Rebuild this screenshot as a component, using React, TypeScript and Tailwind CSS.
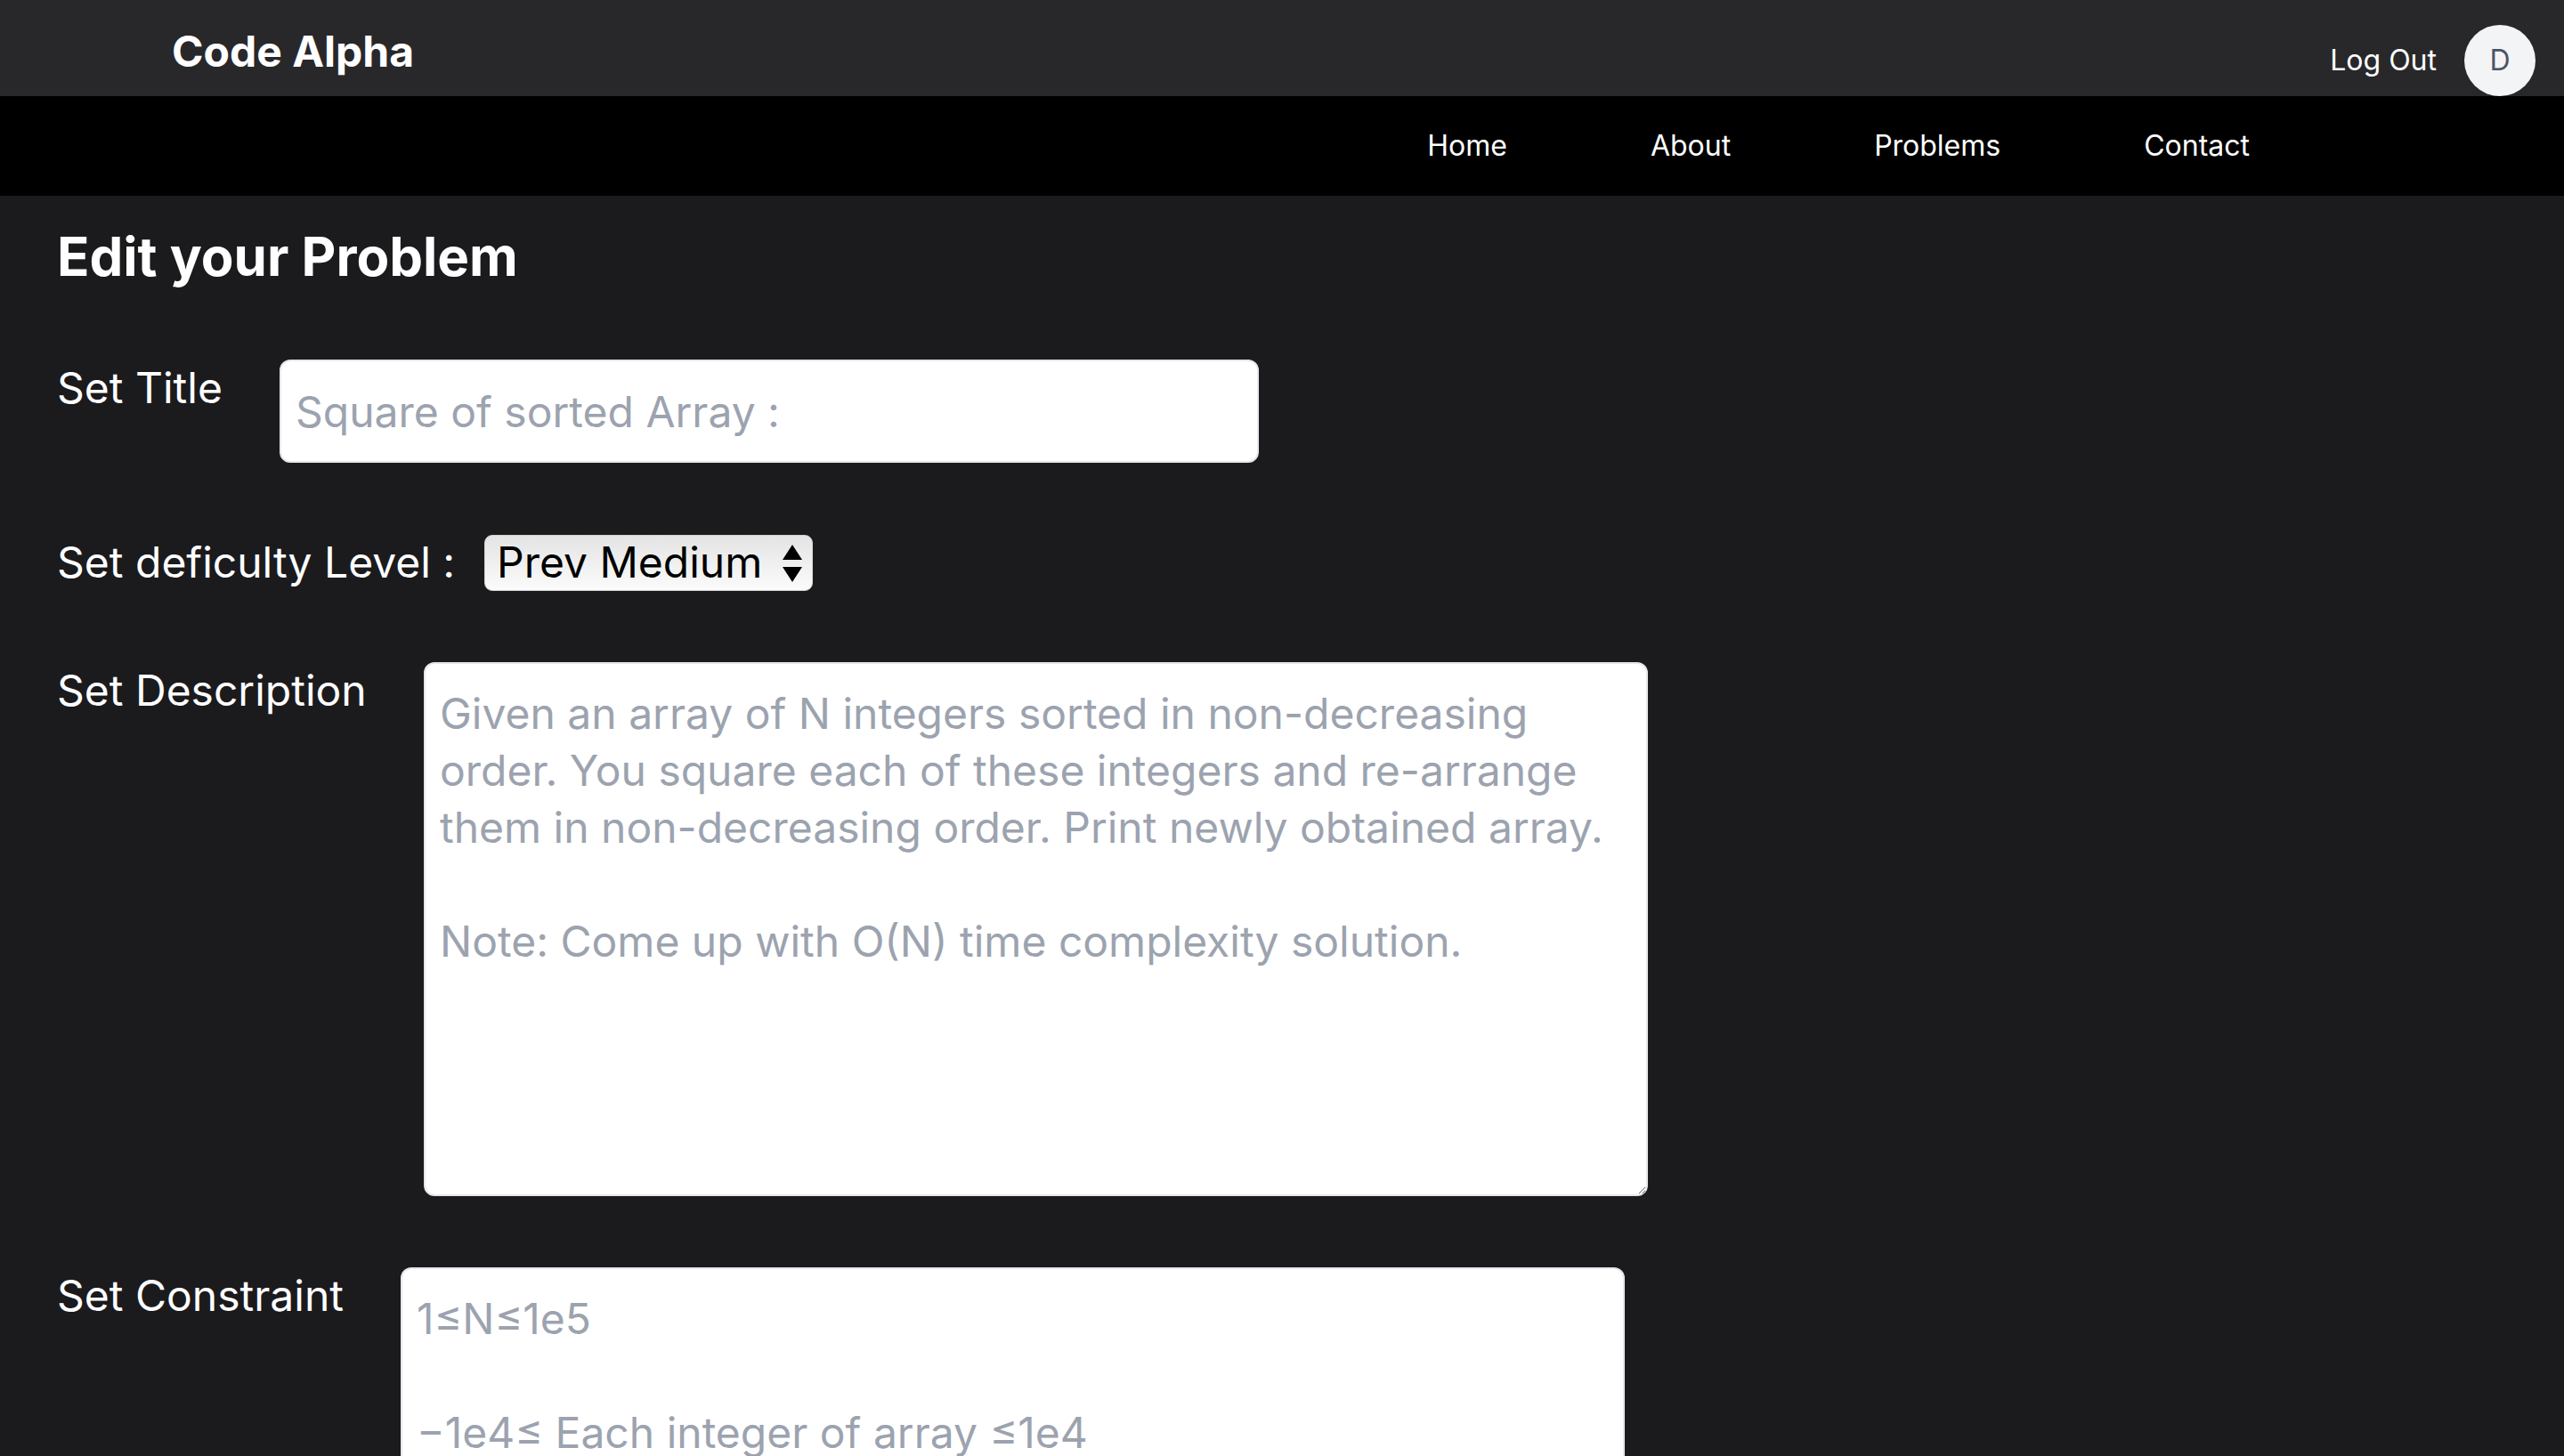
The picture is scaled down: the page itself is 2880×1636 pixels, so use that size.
import React from "react";

export default function App() {
  const font = { fontFamily: "Inter, 'Noto Sans', sans-serif" };
  return (
    <div className="min-h-screen bg-[#1b1b1e] text-white" style={font}>
      {/* Top bar */}
      <header className="flex h-[108px] items-start justify-between bg-[#28282b]">
        <div className="pl-[193px] pt-[26px] text-[48px] font-bold leading-[64px]">Code Alpha</div>
        <div className="flex items-center gap-[31px] pr-[32px] pt-[28px]">
          <button className="text-[32px] leading-[48px] text-white">Log Out</button>
          <div className="flex h-[80px] w-[80px] items-center justify-center rounded-full bg-[#f3f4f6] text-[32px] text-[#4b5563]">
            D
          </div>
        </div>
      </header>

      {/* Nav */}
      <nav className="flex h-[112px] items-center justify-end gap-[161px] bg-black pr-[353px] text-[32px] leading-[48px]">
        <a>Home</a>
        <a>About</a>
        <a>Problems</a>
        <a>Contact</a>
      </nav>

      {/* Main */}
      <main className="flex flex-col gap-[80px] px-[64px] pt-[32px] pb-[80px]">
        <h1 className="text-[60px] font-bold leading-[72px]">Edit your Problem</h1>

        <div className="flex items-start">
          <label className="w-[250px] shrink-0 text-[48px] leading-[64px]">Set Title</label>
          <input
            className="h-[116px] w-[1100px] rounded-[12px] border-2 border-[#e5e7eb] bg-white px-[16px] text-[48px] text-black placeholder:text-[#9ca3af] outline-none"
            placeholder="Square of sorted Array :"
          />
        </div>

        <div className="flex items-center">
          <label className="w-[480px] shrink-0 text-[48px] leading-[64px]">Set deficulty Level :</label>
          <div className="relative h-[63px] w-[369px]">
            <select
              className="h-[63px] w-[369px] appearance-none rounded-[9px] border border-[#d4d4d4] bg-gradient-to-b from-[#e4e4e4] to-[#fbfbfb] pl-[13px] text-[48px] leading-[60px] text-black outline-none"
              defaultValue="prev"
            >
              <option value="prev">Prev Medium</option>
              <option value="easy">Easy</option>
              <option value="medium">Medium</option>
              <option value="hard">Hard</option>
            </select>
            <svg
              className="pointer-events-none absolute right-[12px] top-[11px]"
              width="22"
              height="42"
              viewBox="0 0 22 42"
            >
              <path d="M11 0 L22 17 L0 17 Z" fill="#000" />
              <path d="M0 25 L22 25 L11 42 Z" fill="#000" />
            </svg>
          </div>
        </div>

        <div className="flex items-start">
          <label className="w-[412px] shrink-0 text-[48px] leading-[64px]">Set Description</label>
          <textarea
            className="h-[600px] w-[1375px] rounded-[12px] border-2 border-[#e5e7eb] bg-white px-[16px] py-[24px] text-[48px] leading-[64px] text-black placeholder:text-[#9ca3af] outline-none"
            placeholder={
              "Given an array of N integers sorted in non-decreasing order. You square each of these integers and re-arrange them in non-decreasing order. Print newly obtained array.\n\nNote: Come up with O(N) time complexity solution."
            }
          />
        </div>

        <div className="flex items-start">
          <label className="w-[386px] shrink-0 text-[48px] leading-[64px]">Set Constraint</label>
          <textarea
            className="h-[600px] w-[1375px] rounded-[12px] border-2 border-[#e5e7eb] bg-white px-[16px] py-[24px] text-[48px] leading-[64px] text-black placeholder:text-[#9ca3af] outline-none"
            placeholder={"1≤N≤1e5\n\n−1e4≤ Each integer of array ≤1e4"}
          />
        </div>
      </main>
    </div>
  );
}
